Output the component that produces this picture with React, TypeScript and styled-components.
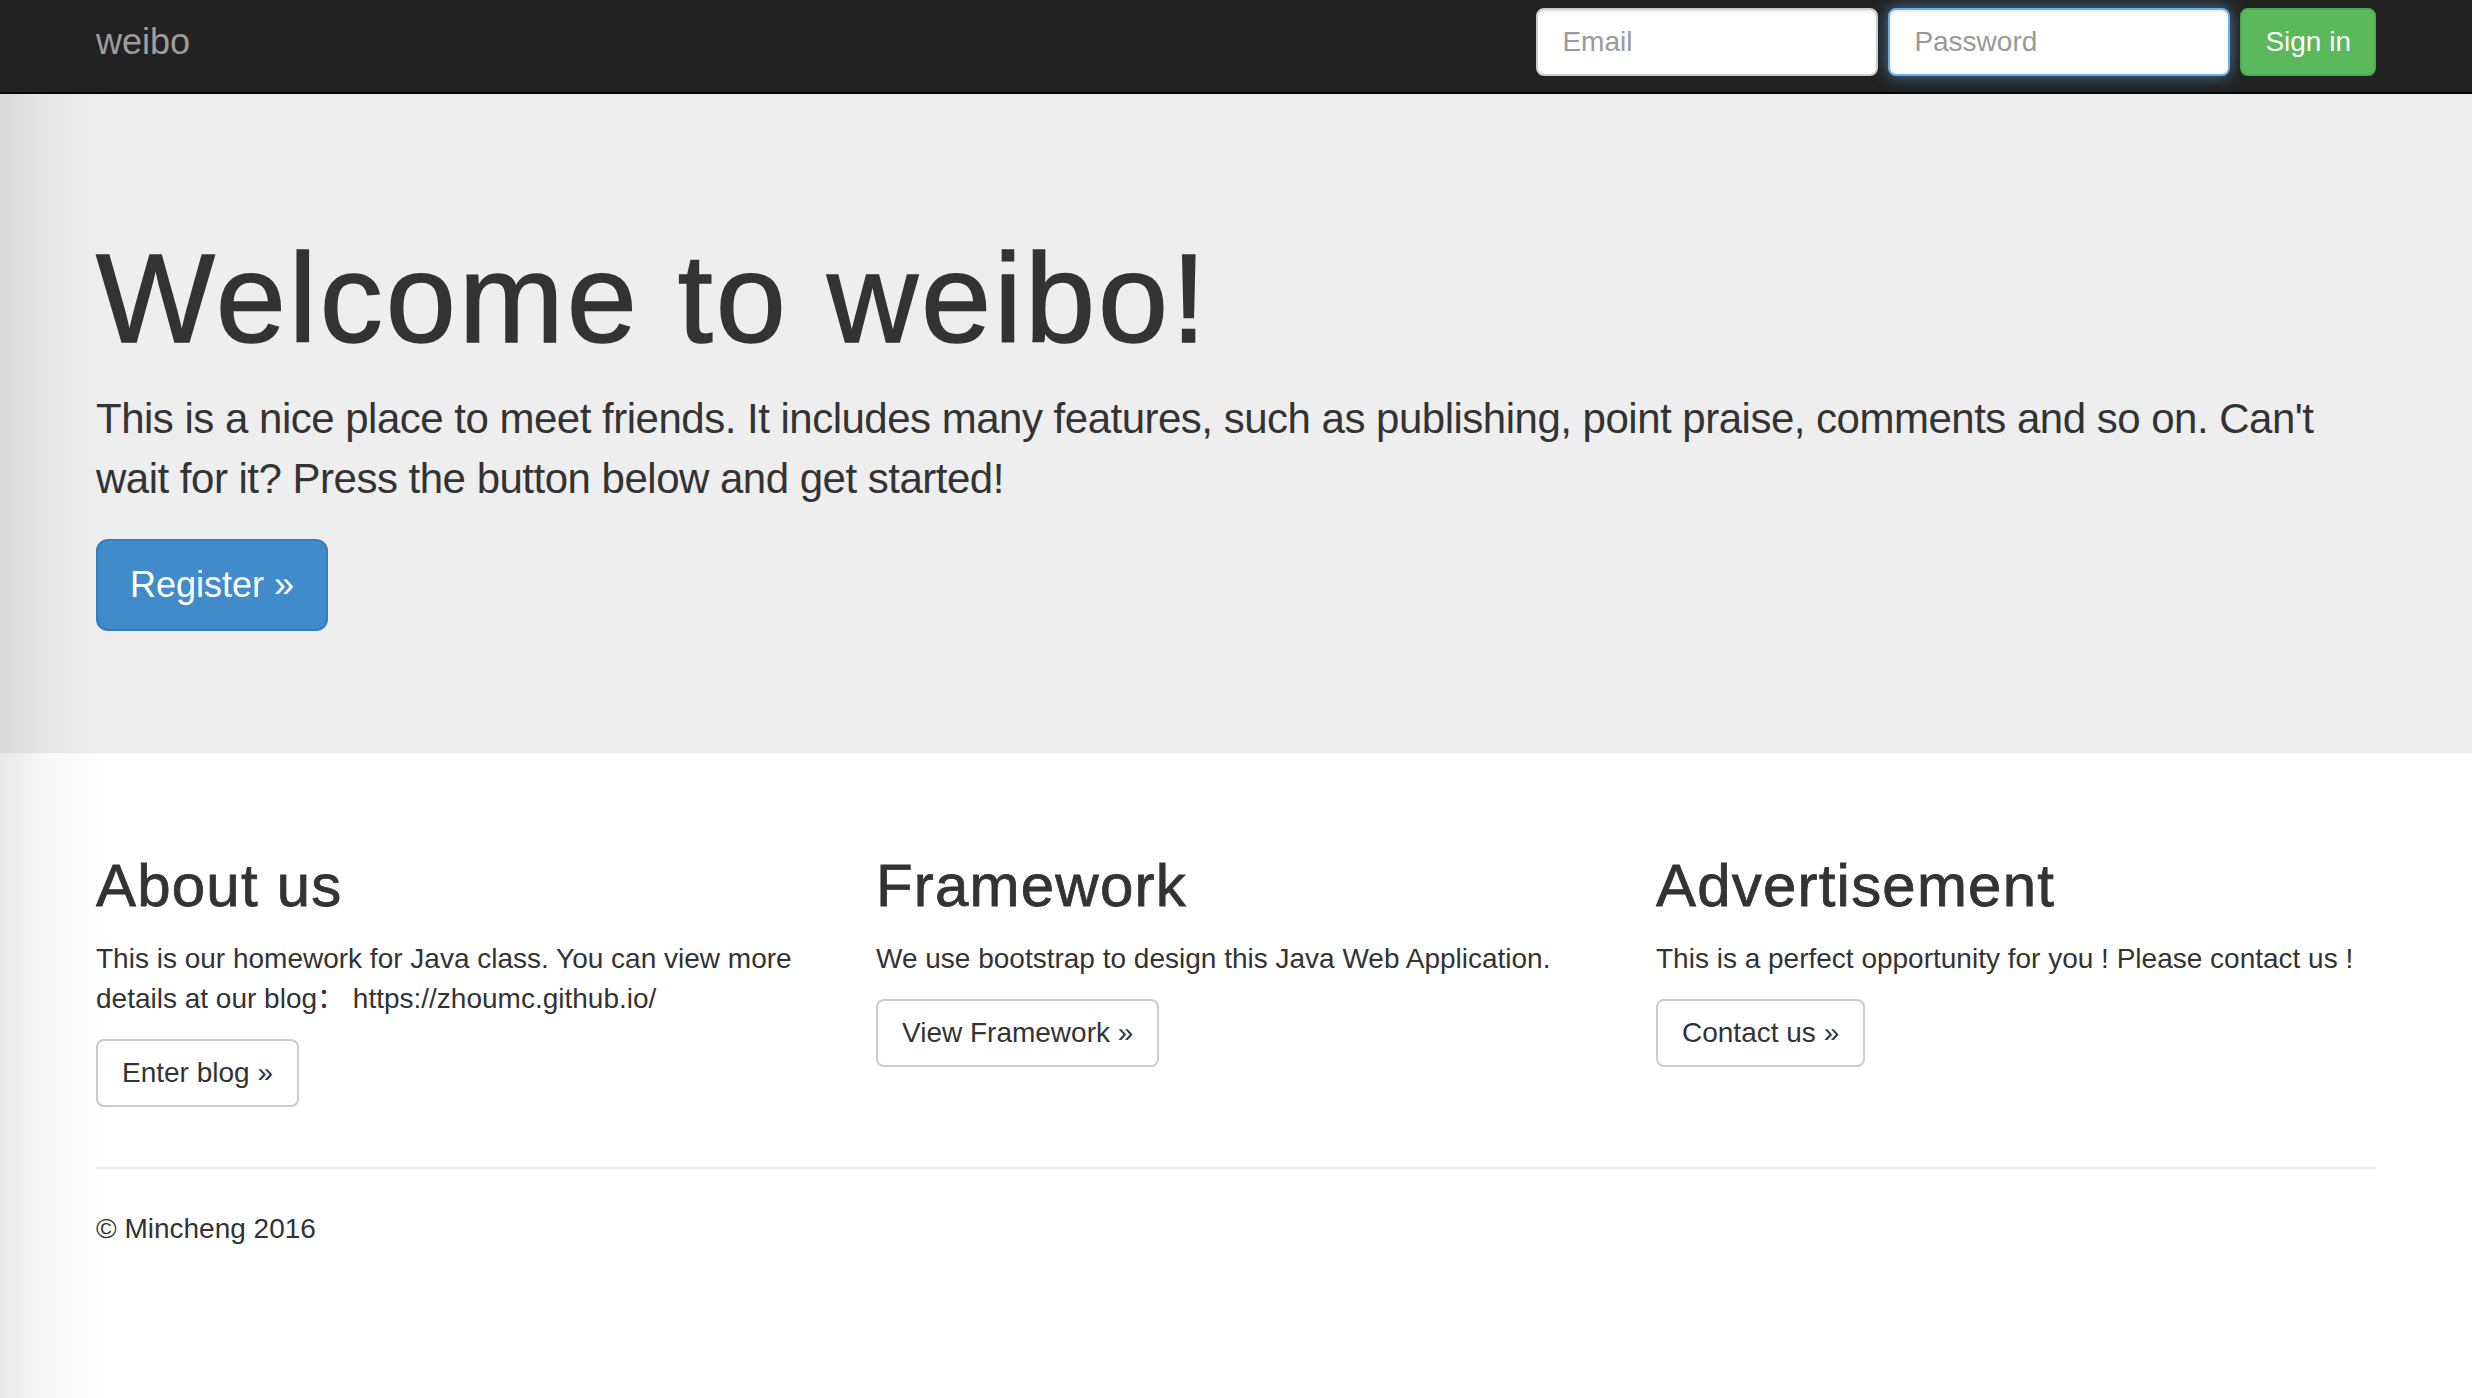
import { FC } from 'react';
import styled, { createGlobalStyle } from 'styled-components';

// the screenshot is a 2x retina capture of a bootstrap 3 page, so every
// bootstrap size is doubled here
const GlobalStyle = createGlobalStyle`
  * {
    box-sizing: border-box;
  }
  body {
    margin: 0;
    font-family: "Liberation Sans", Arial, "Noto Sans CJK SC", sans-serif;
    font-size: 28px;
    line-height: 40px;
    color: #333;
    background: #fff;
  }
`;

const Container = styled.div`
  width: 2340px;
  margin: 0 auto;
  padding: 0 30px;
`;

const NavBar = styled.nav`
  background: #222;
  border-bottom: 2px solid #080808;
  height: 94px;
  padding-bottom: 8px;
`;

const NavInner = styled(Container)`
  height: 100%;
  display: flex;
  align-items: center;
  justify-content: space-between;
`;

const Brand = styled.a`
  font-size: 36px;
  line-height: 40px;
  color: #9d9d9d;
  text-decoration: none;
`;

const LoginForm = styled.form`
  display: flex;
  gap: 10px;
  margin: 0;
`;

const Input = styled.input<{ $focused?: boolean }>`
  width: 342px;
  height: 68px;
  padding: 12px 24px;
  font-family: inherit;
  font-size: 28px;
  color: #555;
  background: #fff;
  border: 2px solid ${p => (p.$focused ? '#66afe9' : '#ccc')};
  border-radius: 8px;
  outline: none;
  box-shadow: ${p =>
    p.$focused
      ? 'inset 0 2px 2px rgba(0,0,0,.075), 0 0 16px rgba(102,175,233,.6)'
      : 'inset 0 2px 2px rgba(0,0,0,.075)'};
  &::placeholder {
    color: #999;
  }
`;

const Button = styled.button<{ $variant: 'primary' | 'success' | 'default'; $large?: boolean }>`
  font-family: inherit;
  font-size: ${p => (p.$large ? '36px' : '28px')};
  line-height: ${p => (p.$large ? '48px' : '40px')};
  padding: ${p => (p.$large ? '20px 32px' : '12px 24px')};
  border-radius: ${p => (p.$large ? '12px' : '8px')};
  border: 2px solid
    ${p =>
      p.$variant === 'primary' ? '#357ebd' : p.$variant === 'success' ? '#4cae4c' : '#ccc'};
  background: ${p =>
    p.$variant === 'primary' ? '#428bca' : p.$variant === 'success' ? '#5cb85c' : '#fff'};
  color: ${p => (p.$variant === 'default' ? '#333' : '#fff')};
  cursor: pointer;
`;

const SignIn = styled(Button)`
  height: 68px;
  padding: 12px 23px;
`;

const ButtonRow = styled.div<{ $gap: number }>`
  display: flex;
  margin-bottom: ${p => p.$gap}px;
`;

const Jumbotron = styled.div`
  background: #eee;
  padding: 96px 0;
  margin-bottom: 60px;
  h1 {
    font-size: 126px;
    line-height: 1.1;
    font-weight: 400;
    letter-spacing: 3px;
    -webkit-text-stroke: 1.5px #333;
    margin: 40px 0 20px;
  }
  p {
    font-size: 42px;
    line-height: 60px;
    letter-spacing: -0.5px;
    margin: 0 0 30px;
  }
`;

const Row = styled.div`
  display: grid;
  grid-template-columns: repeat(3, 1fr);
  margin: 0 -30px;
`;

const Column = styled.div`
  padding: 0 30px;
  h2 {
    font-size: 60px;
    line-height: 66px;
    font-weight: 400;
    letter-spacing: 1.2px;
    -webkit-text-stroke: 0.8px #333;
    margin: 40px 0 20px;
  }
  p {
    margin: 0 0 20px;
  }
`;

const Rule = styled.hr`
  margin: 40px 0;
  border: 0;
  border-top: 2px solid #eee;
`;

const Footer = styled.footer`
  p {
    margin: 0 0 20px;
  }
`;

// window shadow bleeding in from the left edge of the capture
const EdgeShade = styled.div`
  position: fixed;
  left: 0;
  top: 94px;
  bottom: 0;
  width: 110px;
  pointer-events: none;
  background: linear-gradient(to right, rgba(0, 0, 0, 0.09), rgba(0, 0, 0, 0.03) 40%, rgba(0, 0, 0, 0));
`;

const features = [
  {
    title: 'About us',
    text: (
      <>
        This is our homework for Java class. You can view more details at our blog：
        https://zhoumc.github.io/
      </>
    ),
    action: 'Enter blog »'
  },
  {
    title: 'Framework',
    text: <>We use bootstrap to design this Java Web Application.</>,
    action: 'View Framework »'
  },
  {
    title: 'Advertisement',
    text: <>This is a perfect opportunity for you ! Please contact us !</>,
    action: 'Contact us »'
  }
];

const App: FC = () => {
  return (
    <>
      <GlobalStyle />
      <NavBar>
        <NavInner>
          <Brand href="#">weibo</Brand>
          <LoginForm onSubmit={e => e.preventDefault()}>
            <Input type="text" placeholder="Email" />
            <Input type="password" placeholder="Password" $focused />
            <SignIn type="submit" $variant="success">
              Sign in
            </SignIn>
          </LoginForm>
        </NavInner>
      </NavBar>
      <Jumbotron>
        <Container>
          <h1>Welcome to weibo!</h1>
          <p>
            This is a nice place to meet friends. It includes many features, such as
            publishing, point praise, comments and so on. Can't wait for it? Press the
            button below and get started!
          </p>
          <ButtonRow $gap={26}>
            <Button $variant="primary" $large>
              Register »
            </Button>
          </ButtonRow>
        </Container>
      </Jumbotron>
      <Container>
        <Row>
          {features.map(f => (
            <Column key={f.title}>
              <h2>{f.title}</h2>
              <p>{f.text}</p>
              <ButtonRow $gap={20}>
                <Button $variant="default">{f.action}</Button>
              </ButtonRow>
            </Column>
          ))}
        </Row>
        <Rule />
        <Footer>
          <p>© Mincheng 2016</p>
        </Footer>
      </Container>
      <EdgeShade />
    </>
  );
};

export default App;
